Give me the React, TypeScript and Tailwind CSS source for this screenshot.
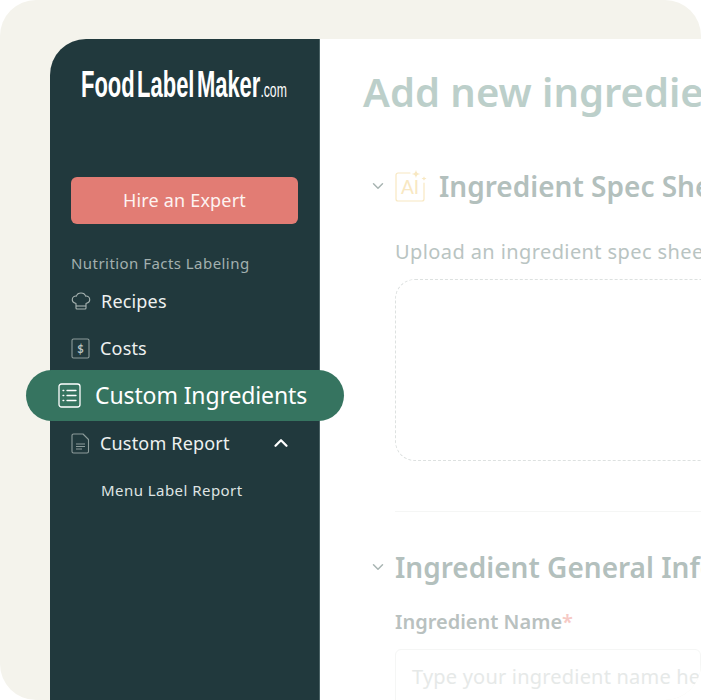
import { ChevronDown, ChevronUp } from "lucide-react";

function ChefIcon() {
  return (
    <svg width="20" height="20" viewBox="0 0 20 20" fill="none" stroke="#a9b5b3" strokeWidth="1.1" strokeLinejoin="round">
      <path d="M5 12.500C2.600 11.800 1 10.200 1.300 8 1.600 5.800 3.600 4.800 5.400 5.100 6 3.200 7.900 2 10 2s4 1.200 4.600 3.100c1.800-.3 3.800.7 4.100 2.900.3 2.200-1.300 3.800-3.700 4.500V17a1 1 0 0 1-1 1H6a1 1 0 0 1-1-1v-4.500Z" />
      <path d="M5 15h10" />
    </svg>
  );
}

function DollarIcon() {
  return (
    <svg width="19" height="21" viewBox="0 0 19 21" fill="none" stroke="#8d9c9b" strokeWidth="1.1">
      <rect x="1" y="1" width="17" height="19" rx="1.500" />
      <text x="9.500" y="14.500" textAnchor="middle" fontSize="11" fontWeight="700" fontFamily="Lato, sans-serif" fill="#b9c4c2" stroke="none">$</text>
    </svg>
  );
}

function ListIcon() {
  return (
    <svg width="23" height="25" viewBox="0 0 23 25" fill="none" stroke="#ffffff" strokeWidth="1.300" strokeLinecap="round">
      <rect x="1" y="1" width="21" height="23" rx="2.500" />
      <path d="M9 7.500h9M9 12.500h9M9 17.500h9" />
      <path d="M5 7.500h.8M5 12.500h.8M5 17.500h.8" />
    </svg>
  );
}

function ReportIcon() {
  return (
    <svg width="19" height="21" viewBox="0 0 19 21" fill="none" stroke="#8d9c9b" strokeWidth="1.100" strokeLinejoin="round">
      <path d="M2.500 1H12l5.500 5.500V18.500a1.500 1.500 0 0 1-1.500 1.500H2.500A1.500 1.500 0 0 1 1 18.500V2.500A1.500 1.500 0 0 1 2.500 1Z" />
      <path d="M5 11h9M5 13.500h9M5 16h6" />
    </svg>
  );
}

function AiIcon() {
  return (
    <svg className="shrink-0" width="32" height="34" viewBox="0 0 32 34" fill="none" stroke="#f8e8c2" strokeWidth="1.200" strokeLinecap="round">
      <path d="M15 4H3a2 2 0 0 0-2 2v24a2 2 0 0 0 2 2h24a2 2 0 0 0 2-2V14" />
      <path d="M21 0.500c.4 3 1.400 4 4.500 4.500-3.100.5-4.100 1.500-4.500 4.500-.4-3-1.400-4-4.500-4.500 3.100-.5 4.100-1.500 4.500-4.500Z" fill="#f8e8c2" stroke="none" />
      <path d="M29 7c.2 1.500.8 2 2.500 2.500-1.700.5-2.300 1-2.500 2.500-.2-1.500-.8-2-2.500-2.500 1.700-.5 2.300-1 2.500-2.500Z" fill="#f8e8c2" stroke="none" />
      <text x="15" y="25" textAnchor="middle" fontSize="19" fontFamily="Lato, sans-serif" fill="#f8e8c2" stroke="none">AI</text>
    </svg>
  );
}

export default function App() {
  return (
    <div className="h-[700px] w-[701px] overflow-hidden bg-white font-['Noto_Sans',sans-serif]">
      <div className="relative h-full overflow-hidden rounded-[36px] bg-[#f4f3ec] pl-[50px] pt-[39px]">
        <div className="flex h-full overflow-hidden rounded-tl-[36px]">
          <aside className="w-[270px] shrink-0 border-r border-[#4a6265] bg-[#21393d] pl-[21px] pr-[21px]">
            <div className="flex h-[138px] items-start pl-[10px] pt-[27px]">
              <div className="flex origin-left scale-x-[0.61] items-baseline whitespace-nowrap font-['Liberation_Sans',sans-serif] text-[36px] font-bold leading-[38px] text-white">
                <span>Food</span>
                <span className="ml-[4px]">Label</span>
                <span className="ml-[4px]">Maker</span>
                <span className="text-[20px] font-normal">.com</span>
              </div>
            </div>
            <button className="flex h-[47px] w-full items-center justify-center rounded-md bg-[#e27c74] text-[18px] tracking-[0.01em] text-[#fdf3f1]">
              Hire an Expert
            </button>
            <p className="mt-[29px] text-[15px] tracking-[0.03em] leading-[20px] text-[#a3b0af]">Nutrition Facts Labeling</p>
            <div className="mt-[16px] flex h-[24px] items-center gap-[10px] text-[18px] tracking-[0.01em] text-[#eef1f0]">
              <ChefIcon />
              <span>Recipes</span>
            </div>
            <div className="mt-[23px] flex h-[24px] items-center gap-[10px] text-[18px] tracking-[0.01em] text-[#eef1f0]">
              <DollarIcon />
              <span>Costs</span>
            </div>
            <div className="mt-[71px] flex h-[24px] items-center gap-[10px] text-[18px] tracking-[0.01em] text-[#eef1f0]">
              <ReportIcon />
              <span>Custom Report</span>
              <ChevronUp className="ml-auto mr-[6px] text-white" size={22} strokeWidth={2.500} />
            </div>
            <p className="mt-[25px] pl-[30px] text-[15px] tracking-[0.03em] leading-[20px] text-[#dfe4e3]">Menu Label Report</p>
          </aside>
          <main className="min-w-0 flex-1 overflow-hidden whitespace-nowrap bg-white pl-[43px]">
            <h1 className="mt-[29px] text-[40px] font-semibold leading-[48px] text-[#bccfca]">Add new ingredient</h1>
            <div className="mt-[52px] flex h-[36px] items-center">
              <ChevronDown className="ml-[6px] mr-[8px] shrink-0 text-[#a9b5b3]" size={18} />
              <AiIcon />
              <span className="ml-[12px] text-[28px] font-semibold text-[#b3c0bd]">Ingredient Spec Sheet</span>
            </div>
            <p className="ml-[32px] mt-[34px] text-[20px] tracking-[0.02em] leading-[28px] text-[#b9c4c2]">Upload an ingredient spec sheet</p>
            <div className="ml-[32px] mt-[13px] h-[182px] w-[400px] rounded-[20px] border border-dashed border-[#dde1e0]" />
            <div className="ml-[32px] mt-[50px] h-px bg-[#f5f6f5]" />
            <div className="mt-[37px] flex h-[36px] items-center">
              <ChevronDown className="ml-[6px] mr-[8px] shrink-0 text-[#a9b5b3]" size={18} />
              <span className="text-[28px] font-semibold text-[#b3c0bd]">Ingredient General Information</span>
            </div>
            <p className="ml-[32px] mt-[23px] text-[20px] font-semibold leading-[28px] text-[#b9c1bf]">
              Ingredient Name<span className="text-[#f6c9c5]">*</span>
            </p>
            <div className="ml-[32px] mt-[13px] flex h-[60px] items-center rounded-md border border-[#f5f6f5] pb-[4px] pl-[16px] text-[20px] tracking-[0.01em] text-[#e6e9e8]">
              Type your ingredient name here
            </div>
          </main>
        </div>
        <div className="absolute left-[26px] top-[370px] flex h-[51px] w-[318px] items-center rounded-full bg-[#367460] pl-[32px] text-[23px] tracking-[-0.005em] text-white">
          <ListIcon />
          <span className="ml-[14px]">Custom Ingredients</span>
        </div>
      </div>
    </div>
  );
}
